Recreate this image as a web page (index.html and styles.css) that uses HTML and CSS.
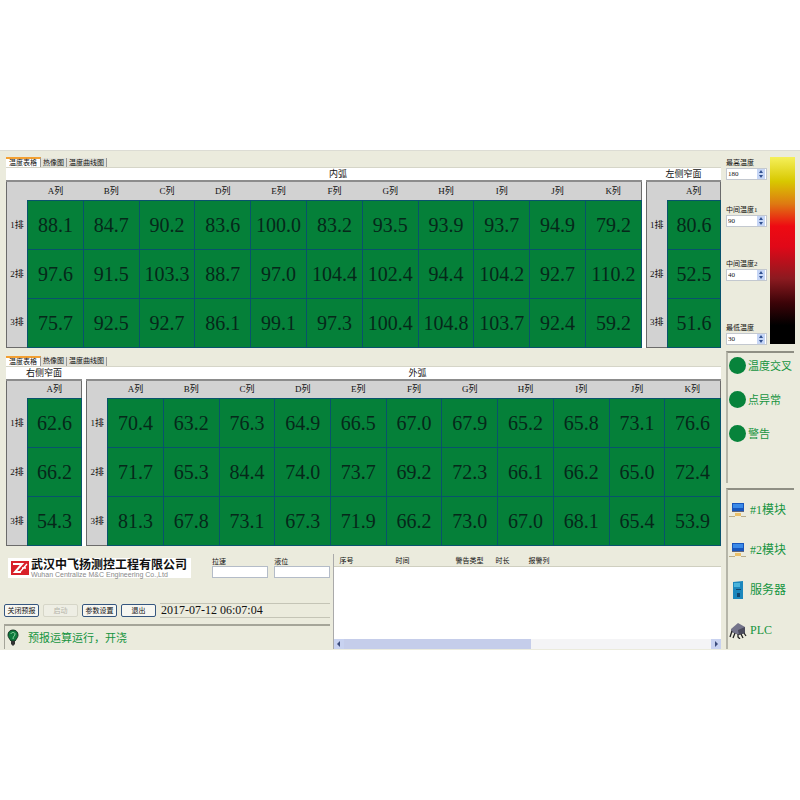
FILE: index.html
```html
<!DOCTYPE html>
<html lang="zh-CN">
<head>
<meta charset="utf-8">
<title>结晶器温度监测</title>
<link rel="stylesheet" href="styles.css">
</head>
<body>
<div class="app">
  <main class="main">
    <section class="sheet">
      <nav class="tabs">
        <button class="tab active">温度表格</button><button class="tab">热像图</button><button class="tab">温度曲线图</button>
      </nav>
      <div class="panes wide-first">
        <div class="pane wide">
          <h2 class="title">内弧</h2>
          <table class="temps" data-values="88.1 84.7 90.2 83.6 100.0 83.2 93.5 93.9 93.7 94.9 79.2|97.6 91.5 103.3 88.7 97.0 104.4 102.4 94.4 104.2 92.7 110.2|75.7 92.5 92.7 86.1 99.1 97.3 100.4 104.8 103.7 92.4 59.2"></table>
        </div>
        <div class="pane">
          <h2 class="title">左侧窄面</h2>
          <table class="temps" data-values="80.6|52.5|51.6"></table>
        </div>
      </div>
    </section>
    <section class="sheet">
      <nav class="tabs">
        <button class="tab active">温度表格</button><button class="tab">热像图</button><button class="tab">温度曲线图</button>
      </nav>
      <div class="panes wide-last">
        <div class="pane">
          <h2 class="title">右侧窄面</h2>
          <table class="temps" data-values="62.6|66.2|54.3"></table>
        </div>
        <div class="pane wide">
          <h2 class="title">外弧</h2>
          <table class="temps" data-values="70.4 63.2 76.3 64.9 66.5 67.0 67.9 65.2 65.8 73.1 76.6|71.7 65.3 84.4 74.0 73.7 69.2 72.3 66.1 66.2 65.0 72.4|81.3 67.8 73.1 67.3 71.9 66.2 73.0 67.0 68.1 65.4 53.9"></table>
        </div>
      </div>
    </section>
    <div class="bottom">
      <div class="control">
        <div class="brand-row">
          <div class="brand">
            <svg class="logo" viewBox="0 0 18 14" aria-hidden="true"><path fill="#d8202a" d="M0 0h18v14H0z"/><path fill="none" stroke="#fff" stroke-width="2" d="M2 3h9L4 11h6"/><path fill="none" stroke="#fff" stroke-width="1.3" d="M9 11l7-8M11 7h4"/></svg>
            <div class="brand-text"><strong>武汉中飞扬测控工程有限公司</strong><small>Wuhan Centralize M&amp;C Engineering Co.,Ltd</small></div>
          </div>
          <label class="field">拉速<input type="text"></label>
          <label class="field">液位<input type="text"></label>
        </div>
        <div class="actions">
          <button class="btn">关闭预报</button>
          <button class="btn" disabled>启动</button>
          <button class="btn">参数设置</button>
          <button class="btn">退出</button>
          <time class="clock">2017-07-12 06:07:04</time>
        </div>
        <div class="message">
          <svg class="bulb" viewBox="0 0 12 18" aria-hidden="true"><path fill="#0d7a3c" stroke="#173524" d="M6 1C3 1 1 3 1 6c0 2 1 3 3 6h4c2-3 3-4 3-6 0-3-2-5-5-5z"/><path fill="none" stroke="#8fd5a5" d="M4 5c0-2 4-2 4 0S6 7 6 10"/><path fill="#333" d="M4 12h4v3L6 17l-2-2z"/></svg>
          <span>预报运算运行，开浇</span>
        </div>
      </div>
      <div class="log">
        <table class="log-table">
          <thead><tr><th>序号</th><th>时间</th><th>警告类型</th><th>时长</th><th>报警列</th></tr></thead>
        </table>
        <div class="scroll"><span class="arrow"><svg viewBox="0 0 8 8"><path d="M5 1v6L2 4z"/></svg></span><span class="track"><span class="thumb"></span></span><span class="arrow"><svg viewBox="0 0 8 8"><path d="M3 1v6l3-3z"/></svg></span></div>
      </div>
    </div>
  </main>
  <aside class="side">
    <div class="scale">
      <div class="limits">
        <label class="limit">最高温度<input type="number" value="180"></label>
        <label class="limit">中间温度1<input type="number" value="90"></label>
        <label class="limit">中间温度2<input type="number" value="40"></label>
        <label class="limit">最低温度<input type="number" value="30"></label>
      </div>
      <div class="gradient"></div>
    </div>
    <ul class="group alarms">
      <li><i class="lamp"></i>温度交叉</li>
      <li><i class="lamp"></i>点异常</li>
      <li><i class="lamp"></i>警告</li>
    </ul>
    <ul class="group devices">
      <li><svg viewBox="0 0 18 18" aria-hidden="true"><path fill="#1856bd" d="M3 2h12v9H3z"/><path fill="#3b8ae8" d="M4 3h10v4H4z"/><path fill="#667" d="M3 10h12v1H3z"/><path fill="#eac06a" d="M6 12h6v3H6z"/><path fill="#b8ad8c" d="M0 15h6v1H0zM12 15h5v1h-5z"/></svg>#1模块</li>
      <li><svg viewBox="0 0 18 18" aria-hidden="true"><path fill="#1856bd" d="M3 2h12v9H3z"/><path fill="#3b8ae8" d="M4 3h10v4H4z"/><path fill="#667" d="M3 10h12v1H3z"/><path fill="#eac06a" d="M6 12h6v3H6z"/><path fill="#b8ad8c" d="M0 15h6v1H0zM12 15h5v1h-5z"/></svg>#2模块</li>
      <li><svg viewBox="0 0 18 18" aria-hidden="true"><path fill="#1c87bd" d="M4 1l10-1v18H4z"/><path fill="#4ab4dc" d="M5 2h6v4H5z"/><path fill="#12466e" d="M7 8h5v1H7zM8 12h3v4H8z"/></svg>服务器</li>
      <li><svg viewBox="0 0 18 18" aria-hidden="true"><path fill="#74748a" d="M2 8l7-6 7 4v6l-6 2-8-3z"/><path fill="#4b4b5c" d="M9 9l7-3v6l-6 2z"/><path fill="none" stroke="#222" stroke-width="1.3" d="M3 10l-2 6M6 12l-2 5M9 13v3l2 2M12 13l2 4M15 12l2 3"/></svg>PLC</li>
    </ul>
  </aside>
</div>
<script src="app.js"></script>
</body>
</html>
```
FILE: styles.css
```css
* { box-sizing: border-box; }
body {
  margin: 0;
  min-height: 100vh;
  display: flex;
  align-items: center;
  background: #fff;
  color: #111;
  font-family: "Liberation Serif", "Noto Sans CJK SC", serif;
  font-size: 7px;
  line-height: 8px;
}
button, input { font: inherit; color: inherit; }
.app {
  width: 100%;
  display: grid;
  grid-template-columns: minmax(0, 1fr) 74px;
  gap: 5px;
  padding: 6px 0 1px;
  background: #ebebdd;
  border-top: 1px solid #dcdcd4;
}
.main { min-width: 0; }

.sheet { padding-left: 6px; margin-bottom: 8px; }
.tabs { display: flex; align-items: flex-end; height: 10px; }
.tab {
  height: 9px;
  padding: 0 2px;
  border: 0;
  border-right: 1px solid #999;
  background: #e2e2da;
  line-height: 8px;
  white-space: nowrap;
}
.tab.active {
  height: 10px;
  padding: 0 3px;
  border-top: 2px solid #f3a032;
  background: #fff;
}
.panes { display: grid; gap: 4px; background: #fff; border-top: 1px solid #d5d5c8; }
.wide-first { grid-template-columns: minmax(0, 634fr) minmax(0, 75fr); }
.wide-last { grid-template-columns: minmax(0, 76fr) minmax(0, 633fr); }
.title {
  margin: 0;
  font-size: 9px;
  font-weight: normal;
  line-height: 12px;
  text-align: center;
}
.wide .title { padding-left: 28px; }
.temps {
  width: 100%;
  table-layout: fixed;
  border-collapse: collapse;
  border: 1px solid #6b6b6b;
  border-top: 2px solid #8c8c8c;
  background: #d2d2d2;
}
.temps th { padding: 0; font-weight: normal; font-size: 9px; white-space: nowrap; }
.temps thead th { height: 19px; }
.temps .corner { width: 21px; }
.temps td {
  height: 49px;
  padding: 0;
  border: 1px solid #08536c;
  background: #058039;
  color: #06281a;
  font-size: 20px;
  line-height: 20px;
  text-align: center;
}

.bottom { display: grid; grid-template-columns: minmax(0, 330fr) minmax(0, 387fr); gap: 3px; }
.control { display: flex; flex-direction: column; }
.brand-row { display: flex; align-items: flex-start; padding: 4px 0 0 8px; gap: 6px; }
.brand { display: flex; align-items: center; gap: 2px; height: 20px; width: 183px; margin-right: 15px; padding-left: 3px; background: #fff; }
.logo { width: 18px; height: 14px; flex: none; }
.brand-text { white-space: nowrap; }
.brand-text strong { display: block; font-size: 12px; line-height: 12px; }
.brand-text small { display: block; font: 7px/7px "Liberation Sans", sans-serif; color: #888; }
.field { flex: 1; min-width: 0; }
.field input { display: block; width: 100%; height: 12px; padding: 0 2px; border: 1px solid #b4bcc8; background: #fff; }
.actions { display: flex; align-items: center; gap: 4px; margin-top: 25px; padding-left: 4px; }
.btn {
  width: 35px;
  height: 13px;
  padding: 0;
  border: 1px solid #35567f;
  border-radius: 2px;
  background: #f6f6f1;
  line-height: 10px;
  white-space: nowrap;
}
.btn:disabled { border-color: #d6d6c8; background: #eeeee4; color: #b4b4a8; }
.clock { flex: 1; border: 1px solid #c4c4b6; border-width: 1px 0; padding-left: 1px; font-size: 12px; line-height: 13px; }
.message {
  display: flex;
  align-items: center;
  gap: 9px;
  height: 25px;
  margin: 6px 0 0 4px;
  padding-left: 2px;
  border-top: 2px solid #a5a599;
  border-left: 1px solid #a5a599;
  color: #159440;
  font-size: 11px;
}
.bulb { width: 12px; height: 18px; }

.log { display: flex; flex-direction: column; border-left: 1px solid #aaa; background: #fff; }
.log-table { width: 100%; table-layout: fixed; border-collapse: collapse; background: #ebebdd; }
.log-table th { height: 12px; padding: 2px 0 0 5px; border-bottom: 1px solid #cfcfc0; text-align: left; font-weight: normal; }
.log-table th:nth-child(1) { width: 56px; }
.log-table th:nth-child(2) { width: 60px; }
.log-table th:nth-child(3) { width: 40px; }
.log-table th:nth-child(4) { width: 33px; }
.scroll { display: flex; height: 10px; margin-top: auto; background: #f4f4f6; }
.arrow { width: 10px; padding: 1px; background: #c8d2f0; }
.arrow svg { display: block; width: 8px; height: 8px; fill: #3c4c7c; }
.track { flex: 1; }
.thumb { display: block; width: 51%; height: 10px; background: #c5cdea; }

.side { display: flex; flex-direction: column; min-width: 0; }
.scale { display: flex; height: 187px; gap: 3px; }
.limits { width: 41px; display: grid; grid-template-rows: 47px 54px 64px 22px; padding-top: 2px; }
.limit { display: block; white-space: nowrap; }
.limit input { display: block; width: 41px; height: 12px; margin-top: 1px; padding: 0 1px; border: 1px solid #c3c8cf; background: #fff; }
.limit input::-webkit-inner-spin-button {
  -webkit-appearance: none;
  opacity: 1;
  width: 8px;
  height: 10px;
  background: #c6d6f6 url("data:image/svg+xml,%3Csvg xmlns='http://www.w3.org/2000/svg' viewBox='0 0 8 10'%3E%3Cpath fill='%23305090' d='M4 1l2 3H2zM4 9L2 6h4z'/%3E%3C/svg%3E");
}
.gradient {
  width: 25px;
  background: linear-gradient(#f5f05a, #d8c800 13%, #de7a12 25%, #ee0a12 37%, #e00818 48%, #8c1a20 65%, #3c0408 78%, #000 90%);
}
.group {
  list-style: none;
  margin: 7px 6px 0 0;
  padding: 0;
  border-top: 2px solid #8f8f84;
  border-left: 2px solid #b5b5a8;
  color: #159440;
}
.group li { display: flex; align-items: center; white-space: nowrap; font-size: 11px; line-height: 16px; }
.alarms { height: 132px; overflow: hidden; padding: 4px 0 0 1px; }
.alarms li { height: 17px; margin-bottom: 17px; gap: 2px; }
.lamp { flex: none; width: 17px; height: 17px; border-radius: 50%; background: #07833b; }
.devices { flex: 1; margin-top: 5px; padding: 10px 0 0 1px; }
.devices li { height: 20px; margin-bottom: 20px; gap: 3px; font-size: 12px; }
.devices li:last-child { margin-bottom: 0; }
.devices svg { flex: none; width: 18px; height: 18px; }
```
FILE: app.js
```js
// Fills each temperature table from its data-values attribute: rows split by "|".
document.querySelectorAll(".temps").forEach((table) => {
  const rows = table.dataset.values.split("|").map((row) => row.split(" "));
  const head = table.createTHead().insertRow();
  const corner = document.createElement("th");
  corner.className = "corner";
  head.append(corner);
  rows[0].forEach((_, i) => {
    const th = document.createElement("th");
    th.textContent = String.fromCharCode(65 + i) + "列";
    head.append(th);
  });
  const body = table.createTBody();
  rows.forEach((values, i) => {
    const tr = body.insertRow();
    const th = document.createElement("th");
    th.textContent = i + 1 + "排";
    tr.append(th);
    values.forEach((value) => { tr.insertCell().textContent = value; });
  });
});
```
